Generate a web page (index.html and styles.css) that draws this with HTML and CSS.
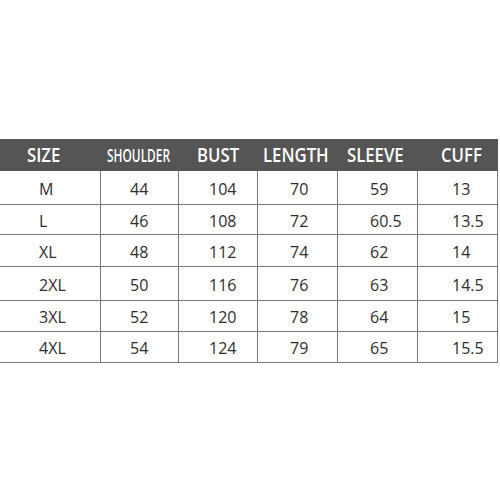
FILE: index.html
```html
<!DOCTYPE html>
<html>
<head>
<meta charset="utf-8">
<link rel="stylesheet" href="styles.css">
</head>
<body>
<div class="chart">
  <div class="row head">
    <div class="c c1"><span class="t">SIZE</span></div>
    <div class="c c2"><span class="t narrow">SHOULDER</span></div>
    <div class="c c3"><span class="t">BUST</span></div>
    <div class="c c4"><span class="t">LENGTH</span></div>
    <div class="c c5"><span class="t">SLEEVE</span></div>
    <div class="c c6"><span class="t">CUFF</span></div>
  </div>
  <div class="row r1">
    <div class="c c1">M</div><div class="c c2">44</div><div class="c c3">104</div><div class="c c4">70</div><div class="c c5">59</div><div class="c c6">13</div>
  </div>
  <div class="row r2">
    <div class="c c1">L</div><div class="c c2">46</div><div class="c c3">108</div><div class="c c4">72</div><div class="c c5">60.5</div><div class="c c6">13.5</div>
  </div>
  <div class="row r3">
    <div class="c c1">XL</div><div class="c c2">48</div><div class="c c3">112</div><div class="c c4">74</div><div class="c c5">62</div><div class="c c6">14</div>
  </div>
  <div class="row r4">
    <div class="c c1">2XL</div><div class="c c2">50</div><div class="c c3">116</div><div class="c c4">76</div><div class="c c5">63</div><div class="c c6">14.5</div>
  </div>
  <div class="row r5">
    <div class="c c1">3XL</div><div class="c c2">52</div><div class="c c3">120</div><div class="c c4">78</div><div class="c c5">64</div><div class="c c6">15</div>
  </div>
  <div class="row r6">
    <div class="c c1">4XL</div><div class="c c2">54</div><div class="c c3">124</div><div class="c c4">79</div><div class="c c5">65</div><div class="c c6">15.5</div>
  </div>
</div>
</body>
</html>
```
FILE: styles.css
```css
html, body {
  margin: 0;
  padding: 0;
  background: #fff;
}
.chart {
  padding-top: 139px;
  width: 498px;
  font-family: "Open Sans", "DejaVu Sans", sans-serif;
}
.row {
  display: grid;
  grid-template-columns: 101px 78px 79px 80px 80px 80px;
}
.c {
  box-sizing: border-box;
  display: flex;
  align-items: center;
  white-space: nowrap;
  border-right: 1px solid #7a7a7a;
  border-bottom: 1px solid #7a7a7a;
  color: #2e2e2e;
  font-size: 16px;
  padding-top: 2px;
}
.head .c {
  border: none;
  background: #555555;
  color: #ffffff;
  font-size: 19px;
  font-weight: 600;
  height: 32px;
  padding-top: 0;
}
.t {
  display: inline-block;
  transform: scaleX(0.88);
  transform-origin: left center;
}
.t.narrow {
  font-size: 18px;
  transform: scaleX(0.66);
}
.r1 .c { height: 34px; }
.r2 .c { height: 30px; }
.r3 .c { height: 32px; }
.r4 .c { height: 34px; }
.r5 .c { height: 31px; }
.r6 .c { height: 31px; }

.c1 { padding-left: 39px; }
.c2 { padding-left: 29px; }
.c3 { padding-left: 30px; }
.c4 { padding-left: 32px; }
.c5 { padding-left: 32px; }
.c6 { padding-left: 34px; }

.head .c1 { padding-left: 27px; }
.head .c2 { padding-left: 6px; }
.head .c3 { padding-left: 18px; }
.head .c4 { padding-left: 5px; }
.head .c5 { padding-left: 9px; }
.head .c6 { padding-left: 23px; }
```
